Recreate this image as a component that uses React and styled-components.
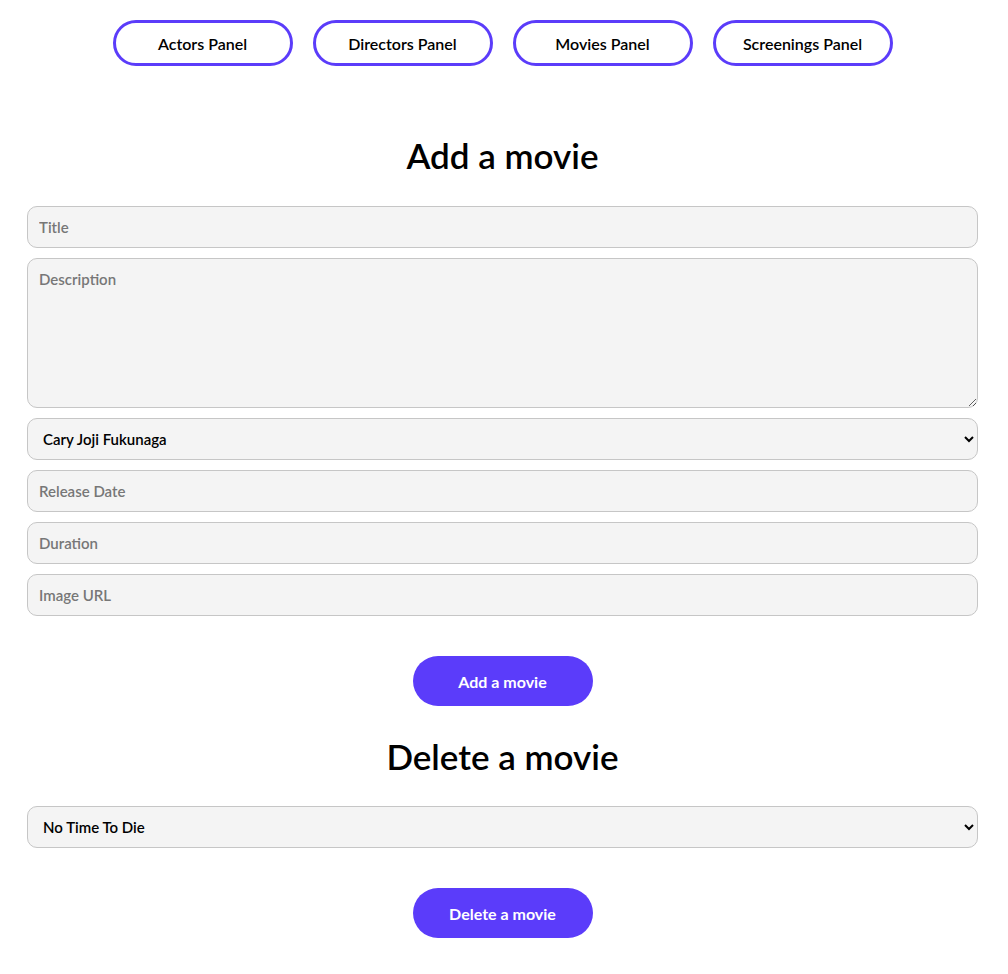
import React, { useState } from "react";
import styled, { createGlobalStyle } from "styled-components";

const purple = "#5b3cfa";

const GlobalStyle = createGlobalStyle`
  body {
    margin: 0;
    background: #fff;
    font-family: "Lato", "Noto Sans", sans-serif;
    color: #000;
  }
  * { box-sizing: border-box; }
`;

const Page = styled.div`
  padding: 20px 30px 36px 27px;
`;

const Nav = styled.nav`
  display: flex;
  justify-content: center;
  gap: 20px;
`;

const NavButton = styled.button`
  width: 180px;
  height: 46px;
  border: 3px solid ${purple};
  border-radius: 23px;
  background: #fff;
  font-family: inherit;
  font-size: 16px;
  font-weight: 600;
  color: #000;
  cursor: pointer;
`;

const Heading = styled.h2`
  margin: ${(p) => p.$top}px 0 ${(p) => p.$bottom}px;
  text-align: center;
  font-size: 35px;
  font-weight: 600;
  line-height: 40px;
`;

const Form = styled.form`
  display: flex;
  flex-direction: column;
  gap: 10px;
`;

const fieldStyles = `
  width: 100%;
  border: 1px solid #c6c6c6;
  border-radius: 10px;
  background: #f4f4f4;
  font-family: inherit;
  font-size: 15px;
  font-weight: 600;
  color: #000;
  padding: 0 11px;
  outline: none;
  &::placeholder { color: #777; }
`;

const Input = styled.input`
  ${fieldStyles}
  height: 42px;
`;

const TextArea = styled.textarea`
  ${fieldStyles}
  height: 150px;
  padding-top: 11px;
  resize: vertical;
`;

const Select = styled.select`
  ${fieldStyles}
  height: 42px;
  padding: 0 8px 0 11px;
`;

const Actions = styled.div`
  display: flex;
  justify-content: center;
  margin-top: ${(p) => p.$top}px;
`;

const SolidButton = styled.button`
  width: 180px;
  height: 50px;
  border: none;
  border-radius: 25px;
  background: ${purple};
  color: #fff;
  font-family: inherit;
  font-size: 16px;
  font-weight: 700;
  cursor: pointer;
`;

export default function App() {
  const [director, setDirector] = useState("Cary Joji Fukunaga");
  const [movie, setMovie] = useState("No Time To Die");
  const panels = ["Actors Panel", "Directors Panel", "Movies Panel", "Screenings Panel"];

  return (
    <>
      <GlobalStyle />
      <Page>
        <Nav>
          {panels.map((p) => (
            <NavButton key={p}>{p}</NavButton>
          ))}
        </Nav>

        <Heading $top={69} $bottom={31}>Add a movie</Heading>
        <Form onSubmit={(e) => e.preventDefault()}>
          <Input placeholder="Title" />
          <TextArea placeholder="Description" />
          <Select value={director} onChange={(e) => setDirector(e.target.value)}>
            <option>Cary Joji Fukunaga</option>
            <option>Denis Villeneuve</option>
          </Select>
          <Input placeholder="Release Date" />
          <Input placeholder="Duration" />
          <Input placeholder="Image URL" />
        </Form>
        <Actions $top={40}>
          <SolidButton>Add a movie</SolidButton>
        </Actions>

        <Heading $top={30} $bottom={30}>Delete a movie</Heading>
        <Select value={movie} onChange={(e) => setMovie(e.target.value)}>
          <option>No Time To Die</option>
          <option>Dune</option>
        </Select>
        <Actions $top={40}>
          <SolidButton>Delete a movie</SolidButton>
        </Actions>
      </Page>
    </>
  );
}
